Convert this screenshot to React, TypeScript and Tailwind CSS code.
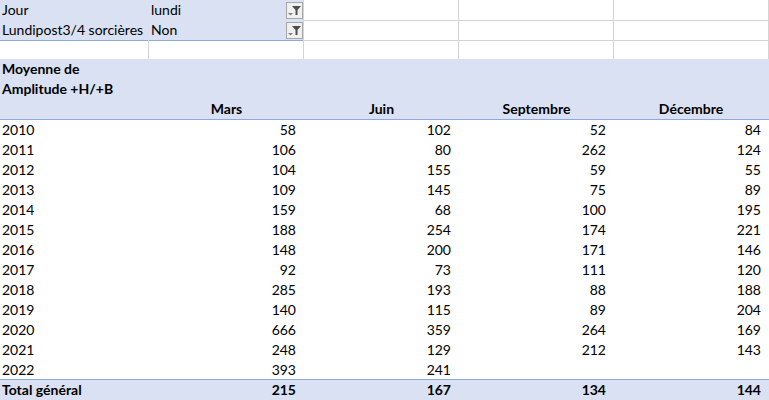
const years: [string, string, string, string, string][] = [
  ["2010", "58", "102", "52", "84"],
  ["2011", "106", "80", "262", "124"],
  ["2012", "104", "155", "59", "55"],
  ["2013", "109", "145", "75", "89"],
  ["2014", "159", "68", "100", "195"],
  ["2015", "188", "254", "174", "221"],
  ["2016", "148", "200", "171", "146"],
  ["2017", "92", "73", "111", "120"],
  ["2018", "285", "193", "88", "188"],
  ["2019", "140", "115", "89", "204"],
  ["2020", "666", "359", "264", "169"],
  ["2021", "248", "129", "212", "143"],
  ["2022", "393", "241", "", ""],
];

const columns = "grid grid-cols-[149px_155px_155px_155px_155px]";

const FilterButton = () => (
  <span className="ml-auto flex h-[17px] w-[17px] items-center justify-center border border-[#a6a6a6] bg-[#f0f0f0]">
    <svg width="15" height="15" viewBox="0 0 15 15">
      <path d="M5 3h9L10.5 7v5H8.5V7z" fill="#4d4d4d" />
      <path d="M1 10h5l-2.5 2.5z" fill="#7f7f7f" />
    </svg>
  </span>
);

const FilterRow = ({ label, value, line }: { label: string; value: string; line: string }) => (
  <div className={`${columns} h-5`}>
    <div className={`flex items-center border-b bg-[#d9e1f2] pl-[2px] ${line}`}>{label}</div>
    <div className={`flex items-center border-b border-r border-r-[#d4d4d4] bg-[#d9e1f2] pl-[2px] ${line}`}>
      {value}
      <FilterButton />
    </div>
    <div className="border-b border-r border-[#d4d4d4]" />
    <div className="border-b border-r border-[#d4d4d4]" />
    <div className="border-b border-r border-[#d4d4d4]" />
  </div>
);

export default function App() {
  return (
    <div className="h-[400px] w-[769px] overflow-hidden bg-white font-['Lato',sans-serif] text-[14px] leading-5 text-black">
      <FilterRow label="Jour" value="lundi" line="border-b-[#d4d4d4]" />
      <FilterRow label="Lundipost3/4 sorcières" value="Non" line="border-b-[#8ea9db]" />
      <div className={`${columns} h-[19px]`}>
        <div className="border-r border-[#d4d4d4]" />
        <div className="border-r border-[#d4d4d4]" />
        <div className="border-r border-[#d4d4d4]" />
        <div className="border-r border-[#d4d4d4]" />
        <div className="border-r border-[#d4d4d4]" />
      </div>

      <div className="h-[61px] border-b border-[#8ea9db] bg-[#d9e1f2] font-bold">
        <div className="pl-[2px]">Moyenne de</div>
        <div className="pl-[2px]">Amplitude +H/+B</div>
        <div className={`${columns} text-center`}>
          <div />
          <div>Mars</div>
          <div>Juin</div>
          <div>Septembre</div>
          <div className="pr-[1px]">Décembre</div>
        </div>
      </div>

      {years.map((row, r) => (
        <div key={row[0]} className={`${columns} ${r === years.length - 1 ? "h-[19px]" : "h-5"}`}>
          <div className="pl-[2px]">{row[0]}</div>
          {row.slice(1).map((v, i) => (
            <div key={i} className="pr-2 text-right">{v}</div>
          ))}
        </div>
      ))}

      <div className={`${columns} h-[21px] border-t border-[#8ea9db] bg-[#d9e1f2] font-bold`}>
        <div className="pl-[2px]">Total général</div>
        <div className="pr-2 text-right">215</div>
        <div className="pr-2 text-right">167</div>
        <div className="pr-2 text-right">134</div>
        <div className="pr-2 text-right">144</div>
      </div>
    </div>
  );
}
